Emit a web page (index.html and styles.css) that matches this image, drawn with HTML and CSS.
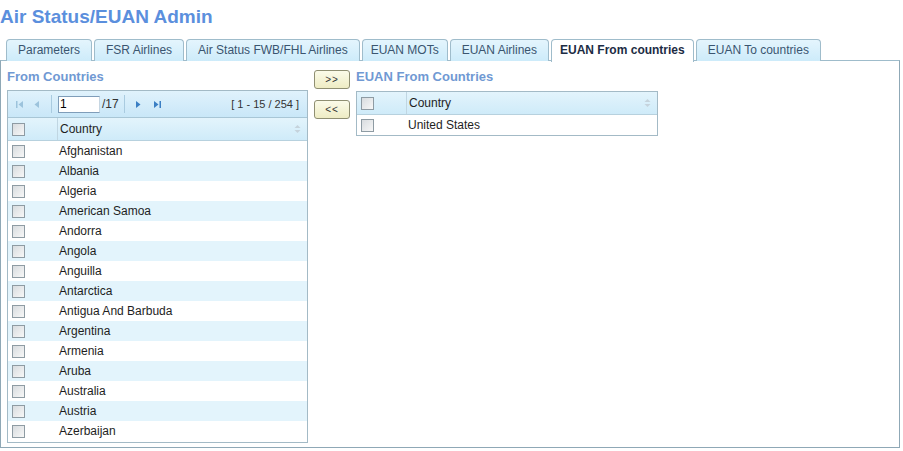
FILE: index.html
```html
<!DOCTYPE html>
<html>
<head>
<meta charset="utf-8">
<link rel="stylesheet" href="styles.css">
</head>
<body>
<h1 class="title">Air Status/EUAN Admin</h1>
<ul class="tabs">
  <li class="tab">Parameters</li>
  <li class="tab">FSR Airlines</li>
  <li class="tab">Air Status FWB/FHL Airlines</li>
  <li class="tab tight">EUAN MOTs</li>
  <li class="tab">EUAN Airlines</li>
  <li class="tab active">EUAN From countries</li>
  <li class="tab">EUAN To countries</li>
</ul>
<div class="panel">
  <div class="col-left">
    <div class="heading">From Countries</div>
    <div class="grid big">
      <div class="pager">
        <span class="pg-btn first"><svg width="9" height="9" viewBox="0 0 9 9"><rect x="1" y="1" width="1.5" height="7" fill="#9cc3dc"/><path d="M8 1 L3.5 4.5 L8 8Z" fill="#9cc3dc"/></svg></span>
        <span class="pg-btn"><svg width="9" height="9" viewBox="0 0 9 9"><path d="M7 1 L2.5 4.5 L7 8Z" fill="#9cc3dc"/></svg></span>
        <span class="sep"></span>
        <input class="pg-input" type="text" value="1">
        <span class="pg-total">/17</span>
        <span class="sep sep2"></span>
        <span class="pg-btn"><svg width="9" height="9" viewBox="0 0 9 9"><path d="M2 1 L6.5 4.5 L2 8Z" fill="#3b7fc4"/></svg></span>
        <span class="pg-btn"><svg width="9" height="9" viewBox="0 0 9 9"><path d="M1 1 L5.5 4.5 L1 8Z" fill="#3b7fc4"/><rect x="6.5" y="1" width="1.5" height="7" fill="#3b7fc4"/></svg></span>
        <span class="pg-info">[ 1 - 15 / 254 ]</span>
      </div>
      <div class="hdr">
        <div class="cb-cell"><span class="cb"></span></div>
        <div class="hdr-name">Country<span class="sort"><svg width="7" height="10" viewBox="0 0 7 10"><path d="M0.5 4 L3.5 1 L6.5 4Z" fill="#c5d3dc"/><path d="M0.5 6 L3.5 9 L6.5 6Z" fill="#c5d3dc"/></svg></span></div>
      </div>
      <div class="row"><div class="cb-cell"><span class="cb"></span></div><div class="name">Afghanistan</div></div>
      <div class="row alt"><div class="cb-cell"><span class="cb"></span></div><div class="name">Albania</div></div>
      <div class="row"><div class="cb-cell"><span class="cb"></span></div><div class="name">Algeria</div></div>
      <div class="row alt"><div class="cb-cell"><span class="cb"></span></div><div class="name">American Samoa</div></div>
      <div class="row"><div class="cb-cell"><span class="cb"></span></div><div class="name">Andorra</div></div>
      <div class="row alt"><div class="cb-cell"><span class="cb"></span></div><div class="name">Angola</div></div>
      <div class="row"><div class="cb-cell"><span class="cb"></span></div><div class="name">Anguilla</div></div>
      <div class="row alt"><div class="cb-cell"><span class="cb"></span></div><div class="name">Antarctica</div></div>
      <div class="row"><div class="cb-cell"><span class="cb"></span></div><div class="name">Antigua And Barbuda</div></div>
      <div class="row alt"><div class="cb-cell"><span class="cb"></span></div><div class="name">Argentina</div></div>
      <div class="row"><div class="cb-cell"><span class="cb"></span></div><div class="name">Armenia</div></div>
      <div class="row alt"><div class="cb-cell"><span class="cb"></span></div><div class="name">Aruba</div></div>
      <div class="row"><div class="cb-cell"><span class="cb"></span></div><div class="name">Australia</div></div>
      <div class="row alt"><div class="cb-cell"><span class="cb"></span></div><div class="name">Austria</div></div>
      <div class="row"><div class="cb-cell"><span class="cb"></span></div><div class="name">Azerbaijan</div></div>
    </div>
  </div>
  <div class="col-mid">
    <button class="mv">&gt;&gt;</button>
    <button class="mv">&lt;&lt;</button>
  </div>
  <div class="col-right">
    <div class="heading">EUAN From Countries</div>
    <div class="grid small">
      <div class="hdr">
        <div class="cb-cell"><span class="cb"></span></div>
        <div class="hdr-name">Country<span class="sort"><svg width="7" height="10" viewBox="0 0 7 10"><path d="M0.5 4 L3.5 1 L6.5 4Z" fill="#c5d3dc"/><path d="M0.5 6 L3.5 9 L6.5 6Z" fill="#c5d3dc"/></svg></span></div>
      </div>
      <div class="row"><div class="cb-cell"><span class="cb"></span></div><div class="name">United States</div></div>
    </div>
  </div>
</div>
</body>
</html>
```
FILE: styles.css
```css
* { box-sizing: border-box; }
body {
  margin: 0;
  font-family: "Liberation Sans", Arial, sans-serif;
  font-size: 12px;
  color: #1e1e1e;
  background: #fff;
}
.title {
  margin: 0;
  padding: 6px 0 0 0;
  height: 39px;
  font-size: 19px;
  font-weight: bold;
  color: #5b8fdd;
  line-height: 22px;
}
.tabs {
  list-style: none;
  margin: 0;
  padding: 0 0 0 6px;
  display: flex;
  gap: 2px;
  height: 22px;
  position: relative;
  z-index: 1;
}
.tab {
  height: 22px;
  padding: 0 11px;
  line-height: 20px;
  border: 1px solid #9fbccb;
  border-bottom: none;
  border-radius: 4px 4px 0 0;
  background: linear-gradient(#e4f5fd, #cdebfa);
  color: #3a5570;
  font-size: 12px;
}
.tab.tight { padding: 0 8px; }
.tab.active {
  background: #fff;
  font-weight: bold;
  color: #1c2c44;
  height: 23px;
  padding: 0 8px;
}
.panel {
  width: 900px;
  height: 388px;
  margin-top: -1px;
  border: 1px solid #8fa8b6;
  border-top-color: #9fbccb;
  display: flex;
  padding: 0 0 0 6px;
}
.heading {
  font-weight: bold;
  color: #7099d3;
  font-size: 13px;
  height: 29px;
  line-height: 15px;
  padding-top: 8px;
}
.col-left { width: 301px; }
.grid {
  border: 1px solid #a3bac6;
}
.big { height: 353px; }
.pager {
  height: 27px;
  display: flex;
  align-items: center;
  background: linear-gradient(#e0f2fc, #c9e7f8);
  border-bottom: 1px solid #a8c6d6;
  padding-left: 3px;
}
.pg-btn {
  width: 16px;
  height: 16px;
  display: flex;
  align-items: center;
  justify-content: center;
  margin-right: 3px;
}
.pg-btn.first { margin-right: 1px; }
.sep {
  width: 1px;
  height: 18px;
  background: #a9cbe0;
  margin: 0 6px 0 4px;
}
.sep2 { margin: 0 6px 0 5px; }
.pg-input {
  width: 42px;
  height: 17px;
  border: 1px solid #7f9db9;
  border-right-color: #c6d6e2;
  font-family: inherit;
  font-size: 12px;
  padding: 0 1px;
  margin: 0;
  color: #000;
}
.pg-total { color: #333; margin-left: 2px; }
.pg-info {
  margin-left: auto;
  margin-right: 8px;
  color: #333;
  font-size: 11px;
}
.hdr {
  height: 23px;
  display: flex;
  background: linear-gradient(#e3f4fc, #cfebf9);
  border-bottom: 1px solid #b7d1de;
}
.cb-cell {
  width: 50px;
  display: flex;
  align-items: center;
  padding-left: 4px;
}
.hdr .cb-cell { border-right: 1px solid #c0d6e2; }
.cb {
  width: 13px;
  height: 13px;
  border: 1px solid #8e9ba3;
  background: linear-gradient(135deg, #d8dcdf, #f7f7f7);
  display: block;
}
.hdr-name {
  flex: 1;
  display: flex;
  align-items: center;
  padding-left: 2px;
  color: #1e1e1e;
}
.sort { margin-left: auto; margin-right: 6px; display: flex; }
.row {
  height: 20px;
  display: flex;
  align-items: center;
}
.row.alt { background: #e3f4fc; }
.name { padding-left: 1px; }
.col-mid {
  width: 48px;
  display: flex;
  flex-direction: column;
  padding: 9px 0 0 6px;
  gap: 11px;
}
.mv {
  width: 36px;
  height: 19px;
  border: 1px solid #8f8f72;
  border-radius: 3px;
  background: linear-gradient(#fbfbe9, #eeecc4);
  font-family: inherit;
  font-size: 10px;
  letter-spacing: 1px;
  color: #333;
  padding: 0;
  line-height: 16px;
}
.col-right { width: 302px; }
.small { margin-top: 1px; }
```
